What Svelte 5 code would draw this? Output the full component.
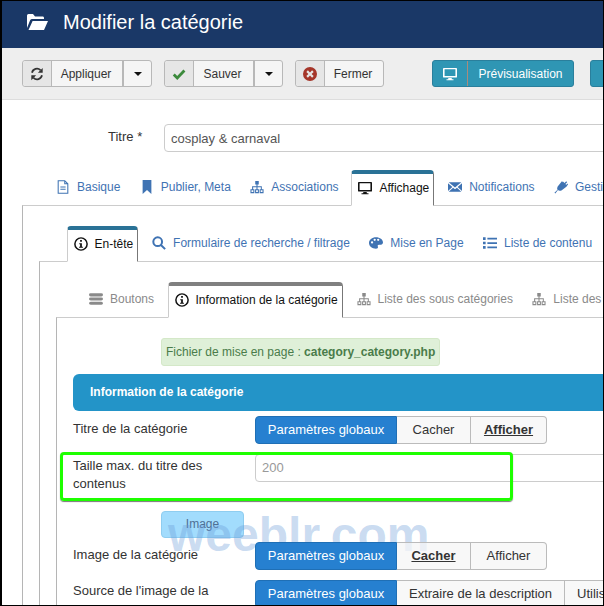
<script>
  const icons = {
    folder: { f: 'M0 14V1.5Q0 0 1.5 0H6L8 2.5H16Q17 2.5 17 4V5H5Q4 5 3.2 6ZM1.5 16L5.6 7H21L17 16Z', vb: '0 0 21 16' },
    refresh: { s: 'M2.3 6.5A5.8 5.8 0 0 1 12 3.6M13.7 9.5A5.8 5.8 0 0 1 4 12.4', f: 'M14.5 1V6.5H9ZM1.5 15V9.5H7Z', sw: 2 },
    check: { s: 'M2 8.5L6 12.5L14.2 4', sw: 3.2 },
    xc: { f: 'M8 0a8 8 0 1 0 0 16A8 8 0 1 0 8 0ZM5.6 3.8L8 6.2L10.4 3.8L12.2 5.6L9.8 8L12.2 10.4L10.4 12.2L8 9.8L5.6 12.2L3.8 10.4L6.2 8L3.8 5.6Z' },
    monitor: { f: 'M1 1H15Q16 1 16 2V11Q16 12 15 12H1Q0 12 0 11V2Q0 1 1 1ZM1.8 2.6V10.4H14.2V2.6ZM6 12.5H10V14H12V15H4V14H6Z' },
    doc: { s: 'M2.5 .8H10L13.5 4.3V15.2H2.5ZM10 .8V4.3H13.5M5 8H11M5 10.5H11', sw: 1.2 },
    bookmark: { f: 'M3 0H13V16L8 11.5L3 16Z' },
    sitemap: { f: 'M6 1H10V5H8.6V7.2H13.5V10.5H15.5V15H11V10.5H12.4V8.4H8.6V10.5H10.2V15H5.8V10.5H7.4V8.4H3.6V10.5H5V15H.5V10.5H2.4V7.2H7.4V5H6ZM1.7 11.7V13.8H3.8V11.7ZM7 11.7V13.8H9V11.7ZM12.2 11.7V13.8H14.3V11.7Z' },
    mail: { f: 'M.8 2.5H15.2L8 8.6ZM0 3.6L5 8L0 12.6ZM16 3.6L11 8L16 12.6ZM5.8 8.8L8 10.6L10.2 8.8L15.2 13.5H.8Z' },
    plug: { f: 'M10 1.5L12 3.5L14 1.5L15 2.5L13 4.5L14 5.5L15.7 3.9L16 5L14.5 7L14.5 7.5L8.5 12Q6 13 4.5 11.5L1.5 15.5L.5 14.5L4 11Q3 9.5 4.2 7.5L9 1.5L9.7 2.5Z' },
    info: { s: 'M8 1a7 7 0 1 0 0 14A7 7 0 1 0 8 1Z', f: 'M7 3.5H9V5.5H7ZM6 7H9V11H10.2V12.4H5.8V11H7V8.4H6Z', sw: 1.7 },
    search: { s: 'M6.5 1.5a5 5 0 1 0 0 10A5 5 0 1 0 6.5 1.5ZM10.2 10.2L15 15', sw: 2.3 },
    palette: { f: 'M8 1.5C12.5 1.5 16 4.2 16 7.5C16 10 13.5 10.2 11.5 10C10 9.9 9.6 11 10.2 12.2C10.7 13.5 9.5 14.5 8 14.5C3.5 14.5 0 11.5 0 8S3.5 1.5 8 1.5ZM3.5 6a1.3 1.3 0 1 0 0 2.6A1.3 1.3 0 1 0 3.5 6ZM6.5 3a1.3 1.3 0 1 0 0 2.6A1.3 1.3 0 1 0 6.5 3ZM10.5 3a1.3 1.3 0 1 0 0 2.6A1.3 1.3 0 1 0 10.5 3Z' },
    list: { f: 'M0 1.5H3V4.5H0ZM5 2H16V4H5ZM0 6.5H3V9.5H0ZM5 7H16V9H5ZM0 11.5H3V14.5H0ZM5 12H16V14H5Z' },
    bars: { f: 'M2 1.5H14Q16 1.5 16 3.2T14 5H2Q0 5 0 3.2T2 1.5ZM2 6.3H14Q16 6.3 16 8T14 9.7H2Q0 9.7 0 8T2 6.3ZM2 11H14Q16 11 16 12.8T14 14.5H2Q0 14.5 0 12.8T2 11Z' }
  };

  const tabs1 = [
    { icon: 'doc', label: 'Basique' },
    { icon: 'bookmark', label: 'Publier, Meta' },
    { icon: 'sitemap', label: 'Associations' },
    { icon: 'monitor', label: 'Affichage', active: true },
    { icon: 'mail', label: 'Notifications' },
    { icon: 'plug', label: 'Gestion' }
  ];
  const tabs2 = [
    { icon: 'info', label: 'En-tête', active: true },
    { icon: 'search', label: 'Formulaire de recherche / filtrage' },
    { icon: 'palette', label: 'Mise en Page' },
    { icon: 'list', label: 'Liste de contenu' }
  ];
  const tabs3 = [
    { icon: 'bars', label: 'Boutons' },
    { icon: 'info', label: 'Information de la catégorie', active: true },
    { icon: 'sitemap', label: 'Liste des sous catégories' },
    { icon: 'sitemap', label: 'Liste des articles' }
  ];
</script>

{#snippet icon(name, size = 14)}
  {@const ic = icons[name]}
  <svg class="ic" width={name === 'folder' ? 21 : size} height={name === 'folder' ? 16 : size} viewBox={ic.vb || '0 0 16 16'}>
    {#if ic.s}<path d={ic.s} fill="none" stroke="currentColor" stroke-width={ic.sw || 1.5} />{/if}
    {#if ic.f}<path d={ic.f} fill="currentColor" fill-rule="evenodd" />{/if}
  </svg>
{/snippet}

{#snippet tabrow(items, cls)}
  <ul class="tabs {cls}">
    {#each items as t}
      <li class="tab" class:active={t.active}>
        {@render icon(t.icon, 14)}
        <span>{t.label}</span>
      </li>
    {/each}
  </ul>
{/snippet}

<div class="frame">
  <header class="head">
    {@render icon('folder')}
    <h1>Modifier la catégorie</h1>
  </header>

  <div class="toolbar">
    <div class="btn">
      <span class="seg ico refresh">{@render icon('refresh', 14)}</span>
      <span class="seg lbl w70">Appliquer</span>
      <span class="seg caret"><i></i></span>
    </div>
    <div class="btn">
      <span class="seg ico green">{@render icon('check', 14)}</span>
      <span class="seg lbl w59">Sauver</span>
      <span class="seg caret"><i></i></span>
    </div>
    <div class="btn">
      <span class="seg ico red">{@render icon('xc', 14)}</span>
      <span class="seg lbl w58">Fermer</span>
    </div>
    <div class="btn teal">
      <span class="seg ico">{@render icon('monitor', 14)}</span>
      <span class="seg lbl w105">Prévisualisation</span>
    </div>
    <div class="btn teal next"></div>
  </div>

  <div class="titlerow">
    <label for="titre">Titre *</label>
    <input id="titre" value="cosplay &amp; carnaval" />
  </div>

  {@render tabrow(tabs1, 'r1')}
  <section class="box b1">
    {@render tabrow(tabs2, 'r2')}
    <section class="box b2">
      {@render tabrow(tabs3, 'r3')}
      <section class="box b3">
        <div class="alert">Fichier de mise en page : <b>category_category.php</b></div>
        <div class="band">Information de la catégorie</div>

        <div class="row r-title">
          <div class="lab">Titre de la catégorie</div>
          <div class="group">
            <span class="on">Paramètres globaux</span><span class="wc">Cacher</span><span class="wa sel">Afficher</span>
          </div>
        </div>

        <div class="row r-size">
          <div class="lab two">Taille max. du titre des contenus</div>
          <input class="num" value="200" />
          <div class="hilite"></div>
        </div>

        <div class="badge">Image</div>

        <div class="row r-img">
          <div class="lab">Image de la catégorie</div>
          <div class="group">
            <span class="on">Paramètres globaux</span><span class="wc sel">Cacher</span><span class="wa">Afficher</span>
          </div>
        </div>

        <div class="row r-src">
          <div class="lab two">Source de l'image de la</div>
          <div class="group">
            <span class="on">Paramètres globaux</span><span>Extraire de la description</span><span>Utiliser</span>
          </div>
        </div>
      </section>
    </section>
  </section>

  <div class="mark">weeblr.com</div>
</div>

<style>
  :global(body) { margin: 0; background: #fff; }
  .frame {
    position: relative;
    box-sizing: border-box;
    width: 604px;
    height: 606px;
    overflow: hidden;
    border-style: solid;
    border-color: #000;
    border-width: 1px 1px 1px 2px;
    background: #fff;
    font-family: "Liberation Sans", Arial, sans-serif;
    font-size: 13px;
    color: #333;
  }
  .ic { display: block; flex: none; }

  .head {
    box-sizing: border-box;
    height: 47px;
    background: #1a3867;
    color: #fff;
    display: flex;
    align-items: center;
    padding: 0 0 5px 25px;
    gap: 15px;
  }
  h1 { margin: 0; font-size: 20px; font-weight: 400; }

  .toolbar {
    box-sizing: border-box;
    height: 52px;
    background: #eee;
    border-bottom: 1px solid #ddd;
    padding: 12px 0 0 20px;
    display: flex;
    align-items: flex-start;
    gap: 12px;
    width: 700px;
  }
  .btn {
    flex: none;
    box-sizing: border-box;
    height: 27px;
    display: flex;
    background: #f5f5f5;
    border: 1px solid #b8b8b8;
    border-radius: 3px;
    font-size: 12px;
    color: #333;
  }
  .seg { display: flex; align-items: center; justify-content: center; box-sizing: border-box; }
  .lbl { padding-right: 2px; }
  .ico { width: 29px; background: #e6e6e6; border-right: 1px solid #b8b8b8; border-radius: 3px 0 0 3px; }
  .refresh { color: #333; }
  .green { color: #3c8a3c; }
  .red { color: #a5362a; }
  .w70 { width: 70px; }
  .w59 { width: 59px; }
  .w58 { width: 58px; }
  .w105 { width: 105px; padding-right: 0; }
  .caret { width: 29px; border-left: 2px solid #b8b8b8; }
  .caret i { width: 0; height: 0; border: 4px solid transparent; border-top: 4px solid #111; border-bottom: 0; }
  .teal {
    background: #2f96b4;
    border-color: #2a7f9c;
    color: #fff;
    margin-left: 36px;
  }
  .teal .ico { width: 35px; background: none; border-right: 1px solid #a98b7c; }
  .next { width: 60px; margin-left: 4px; }

  .titlerow { display: flex; align-items: flex-start; margin-top: 24px; padding-left: 106px; width: 700px; }
  .titlerow label { width: 56px; line-height: 26px; }
  input {
    box-sizing: border-box;
    font: inherit;
    color: #555;
    border: 1px solid #ccc;
    border-radius: 4px;
    padding: 0 6px;
    height: 28px;
    width: 560px;
    background: #fff;
  }

  .tabs { list-style: none; margin: 18px 0 -1px; padding: 0; display: flex; align-items: flex-end; gap: 6.4px; position: relative; z-index: 1; white-space: nowrap; }
  .r1 { margin-left: 47px; }
  .r2 { margin: 0 0 -1px 27px; padding-top: 20px; }
  .r3 { margin: 0 0 -1px 27px; padding-top: 20px; }
  .tab {
    box-sizing: border-box;
    height: 36px;
    display: flex;
    align-items: center;
    gap: 7px;
    padding: 0 6px 2px 7px;
    font-size: 12px;
    color: #3f73b3;
    flex: none;
  }
  .r3 .tab { color: #8a8a8a; }
  .tab.active {
    color: #111;
    background: #fff;
    border: 1px solid #ccc;
    border-top: 4px solid #2a7296;
    border-right: 1px solid #777;
    border-bottom: 1px solid #fff;
    border-radius: 4px 4px 0 0;
    padding: 0 4px 4px 6px;
    margin: 0 .5px;
  }
  .r3 .tab.active { color: #111; border-top-color: #808080; }
  .r3 .tab:first-child { margin-left: -1px; margin-right: .6px; }

  .box { border-left: 1px solid #b5b5b5; border-top: 1px solid #ccc; width: 700px; }
  .b1 { margin-left: 20px; padding-left: 16px; }
  .b2 { padding-left: 16px; }
  .b3 { padding-left: 16px; padding-top: 20px; }

  .alert {
    box-sizing: border-box;
    margin-left: 88px;
    width: 279px;
    height: 28px;
    line-height: 26px;
    padding-left: 4px;
    background: #dff0d8;
    border: 1px solid #d4e8c8;
    border-radius: 3px;
    color: #4a7c4a;
    font-size: 12px;
    white-space: nowrap;
  }
  .band {
    box-sizing: border-box;
    margin-top: 8px;
    height: 37px;
    line-height: 37px;
    padding-left: 17px;
    background: #2394c8;
    color: #fff;
    font-weight: 700;
    font-size: 12px;
    border-radius: 6px 0 0 6px;
  }

  .row { display: flex; align-items: flex-start; position: relative; }
  .lab { width: 182px; flex: none; line-height: 18px; padding-top: 4px; }
  .r-title { margin-top: 5px; }
  .r-size { margin-top: 10px; height: 50px; }
  .r-size .lab { padding-top: 3px; }
  .r-img { margin-top: 4px; z-index: 2; }
  .r-img .lab { padding-top: 4px; }
  .r-src { margin-top: 10px; z-index: 2; }
  .r-src .lab { padding-top: 2px; }
  .group { display: flex; flex: none; box-sizing: border-box; height: 28px; }
  .group span {
    flex: none;
    box-sizing: border-box;
    padding: 0 12px;
    line-height: 26px;
    text-align: center;
    background: rgba(245, 245, 245, 0.75);
    border: 1px solid #bbb;
    border-left: 0;
    color: #333;
  }
  .group span:last-child { border-radius: 0 4px 4px 0; }
  .group .wc { width: 74px; padding: 0; }
  .group .wa { width: 76px; padding: 0; }
  .group .on {
    width: 142px;
    padding: 0;
    background: #2680d0;
    border: 1px solid #1f6fb5;
    color: #fff;
    border-radius: 4px 0 0 4px;
  }
  .group .sel { font-weight: 700; text-decoration: underline; }
  .num { width: 500px; height: 28px; color: #999; padding-bottom: 2px; }

  .hilite {
    position: absolute;
    left: -13px;
    top: -2px;
    box-sizing: border-box;
    width: 453px;
    height: 49px;
    border: 3px solid #1eff00;
    border-radius: 4px;
    box-shadow: 0 1px 1px #777;
  }
  .badge {
    box-sizing: border-box;
    margin: 7px 0 0 88px;
    width: 83px;
    height: 27px;
    line-height: 25px;
    text-align: center;
    background: #a2dcfd;
    border: 1px solid #8fcdf0;
    border-radius: 4px;
    font-size: 12px;
    color: #4f6f94;
  }

  .mark {
    position: absolute;
    left: 166px;
    top: 504px;
    z-index: 1;
    font-size: 48px;
    line-height: 60px;
    font-weight: 700;
    color: rgba(105, 155, 215, 0.36);
    pointer-events: none;
    white-space: nowrap;
  }
</style>
